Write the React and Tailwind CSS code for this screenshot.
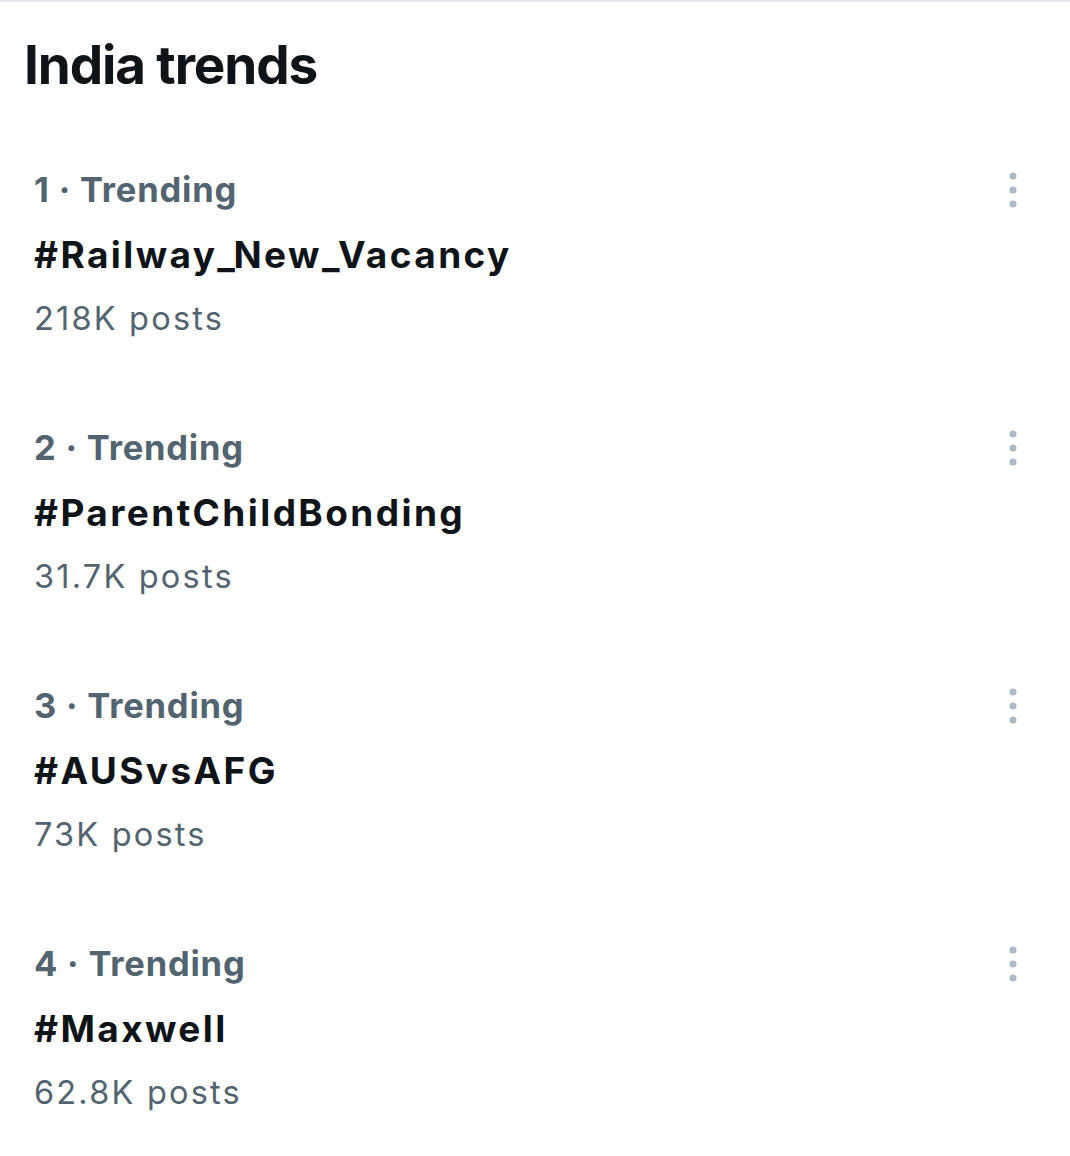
import React from "react";

const trends = [
  { rank: 1, tag: "#Railway_New_Vacancy", posts: "218K posts" },
  { rank: 2, tag: "#ParentChildBonding", posts: "31.7K posts" },
  { rank: 3, tag: "#AUSvsAFG", posts: "73K posts" },
  { rank: 4, tag: "#Maxwell", posts: "62.8K posts" },
];

function Dots() {
  return (
    <svg width="40" height="40" viewBox="0 0 40 40" className="block">
      <circle cx="20" cy="6" r="3.6" fill="#aebbc4" />
      <circle cx="20" cy="20" r="3.6" fill="#aebbc4" />
      <circle cx="20" cy="34" r="3.6" fill="#aebbc4" />
    </svg>
  );
}

function Tag({ text }) {
  const parts = text.split("_");
  return (
    <>
      {parts.map((p, i) => (
        <React.Fragment key={i}>
          {i > 0 && <span className="tracking-[-1.5px]">_</span>}
          {p}
        </React.Fragment>
      ))}
    </>
  );
}

export default function App() {
  return (
    <div
      className="w-[1070px] h-[1156px] bg-white border-t-2 border-[#e3e6e8] overflow-hidden"
      style={{ fontFamily: "Inter, 'Noto Sans', sans-serif" }}
    >
      <div className="pt-[33px] pl-[24px] pb-[30px]">
        <h1 className="text-[53px] leading-[60px] font-bold tracking-[-1.1px] text-[#0f1419]">
          India trends
        </h1>
      </div>
      <div>
        {trends.map((t) => (
          <div key={t.rank} className="flex py-[33px] pl-[34px] pr-[37px]">
            <div className="flex-1">
              <div className="text-[34.5px] leading-[64px] font-bold tracking-[0.8px] text-[#536471]">
                {t.rank} · Trending
              </div>
              <div className="text-[37px] leading-[66px] font-bold tracking-[2.4px] text-[#0f1419]">
                <Tag text={t.tag} />
              </div>
              <div className="text-[32.5px] leading-[62px] tracking-[2.2px] text-[#536471]">
                {t.posts}
              </div>
            </div>
            <div className="pt-[12px]">
              <Dots />
            </div>
          </div>
        ))}
      </div>
    </div>
  );
}
